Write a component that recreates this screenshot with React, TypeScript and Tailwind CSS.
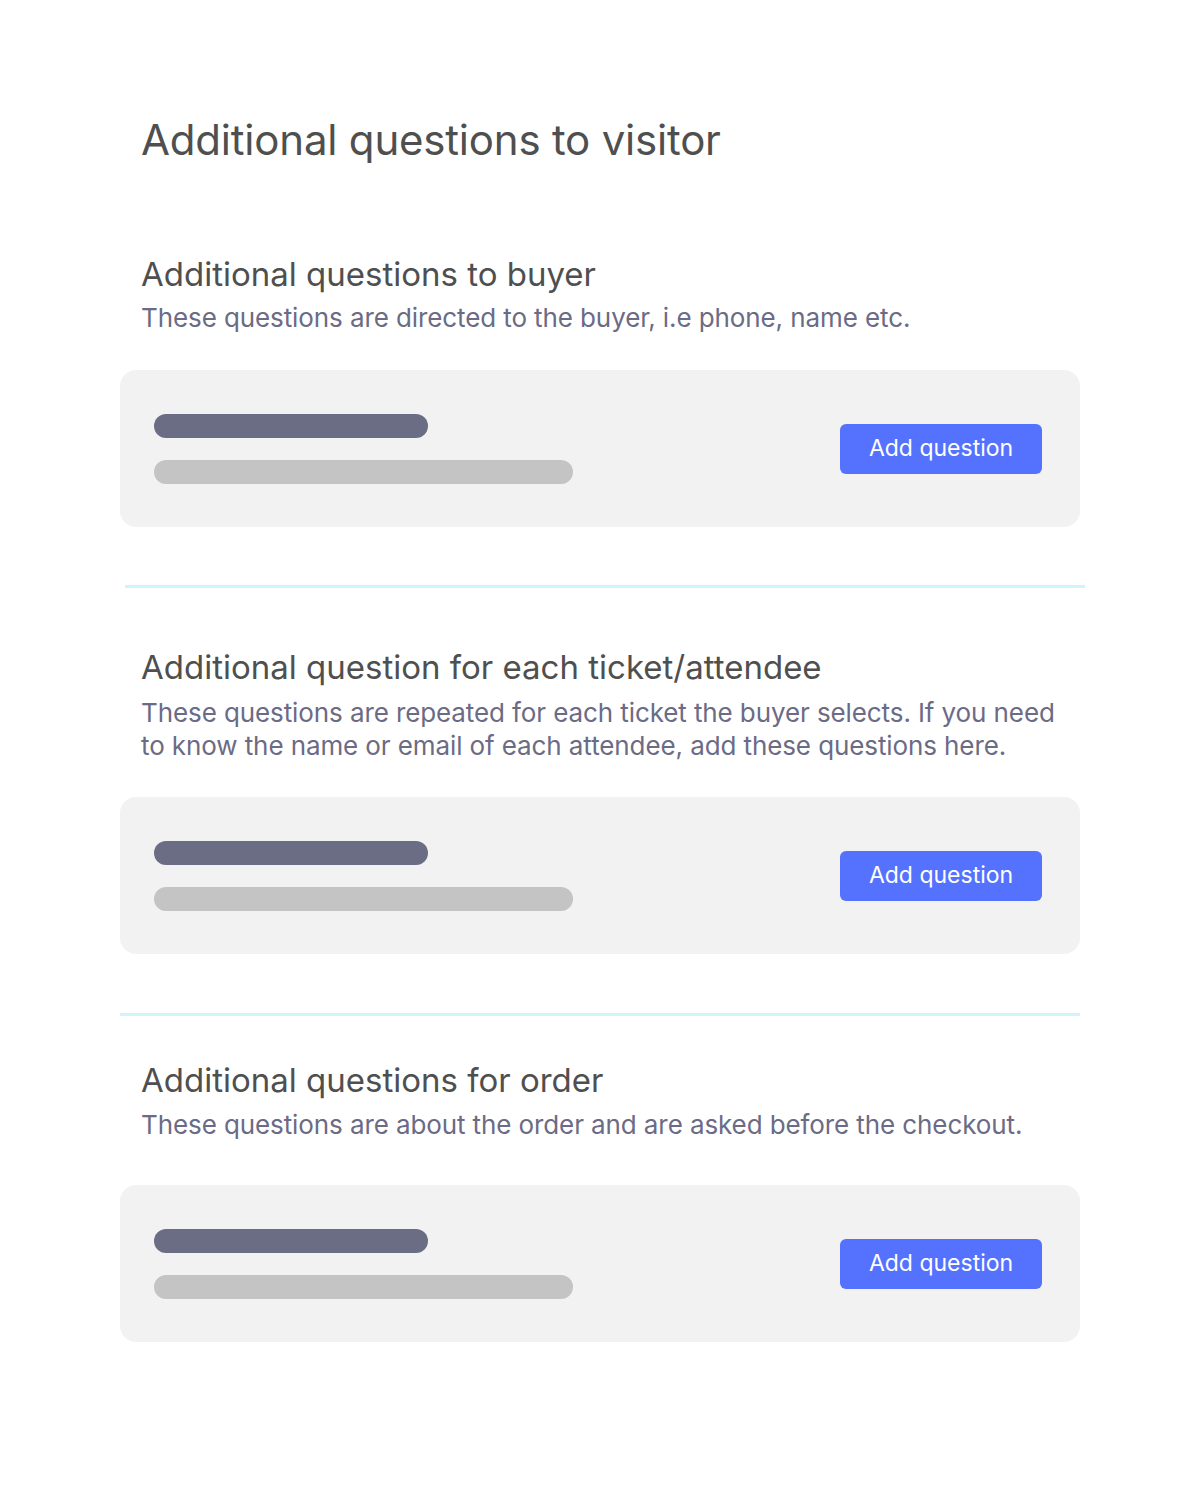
const sections = [
  {
    title: 'Additional questions to buyer',
    desc: ['These questions are directed to the buyer, i.e phone, name etc.'],
    top: 'mt-[86px]',
    descTop: 'mt-[7px]',
    cardTop: 'mt-[36px]',
  },
  {
    title: 'Additional question for each ticket/attendee',
    desc: [
      'These questions are repeated for each ticket the buyer selects. If you need',
      'to know the name or email of each attendee, add these questions here.',
    ],
    top: 'mt-[59px]',
    descTop: 'mt-[9px]',
    cardTop: 'mt-[35px]',
  },
  {
    title: 'Additional questions for order',
    desc: ['These questions are about the order and are asked before the checkout.'],
    top: 'mt-[44px]',
    descTop: 'mt-[8px]',
    cardTop: 'mt-[44px]',
  },
];

function QuestionCard() {
  return (
    <div className="flex h-[157px] items-center justify-between rounded-2xl bg-[#f2f2f2] pl-[34px] pr-[38px]">
      <div className="flex flex-col gap-[22px]">
        <div className="h-6 w-[274px] rounded-full bg-[#6b6d85]" />
        <div className="h-6 w-[419px] rounded-full bg-[#c4c4c4]" />
      </div>
      <button className="h-[50px] w-[202px] rounded-md bg-[#5572ff] text-[23px] text-white">
        Add question
      </button>
    </div>
  );
}

export default function App() {
  return (
    <div className="min-h-[1500px] bg-white font-['Inter',sans-serif] text-[#4f4f4f]">
      <div className="ml-[120px] w-[960px] pt-[112px]">
        <h1 className="pl-[21px] text-[42px] leading-[56px] font-normal tracking-[-0.2px]">
          Additional questions to visitor
        </h1>

        {sections.map((s, i) => (
          <div key={s.title}>
            {i > 0 && (
              <div
                className={
                  i === 1
                    ? 'ml-[5px] mt-[58px] h-[3px] w-[960px] bg-[#cdf5fb]'
                    : 'mt-[59px] h-[3px] w-[960px] bg-[#cdf5fb]'
                }
              />
            )}
            <div className={`${s.top} pl-[21px]`}>
              <h2 className="text-[33px] leading-[40px]">{s.title}</h2>
              <p className={`${s.descTop} text-[26px] leading-[33px] tracking-[-0.1px] text-[#6b6b85]`}>
                {s.desc.map((d) => (
                  <span key={d} className="block">
                    {d}
                  </span>
                ))}
              </p>
            </div>
            <div className={s.cardTop}>
              <QuestionCard />
            </div>
          </div>
        ))}
      </div>
    </div>
  );
}
